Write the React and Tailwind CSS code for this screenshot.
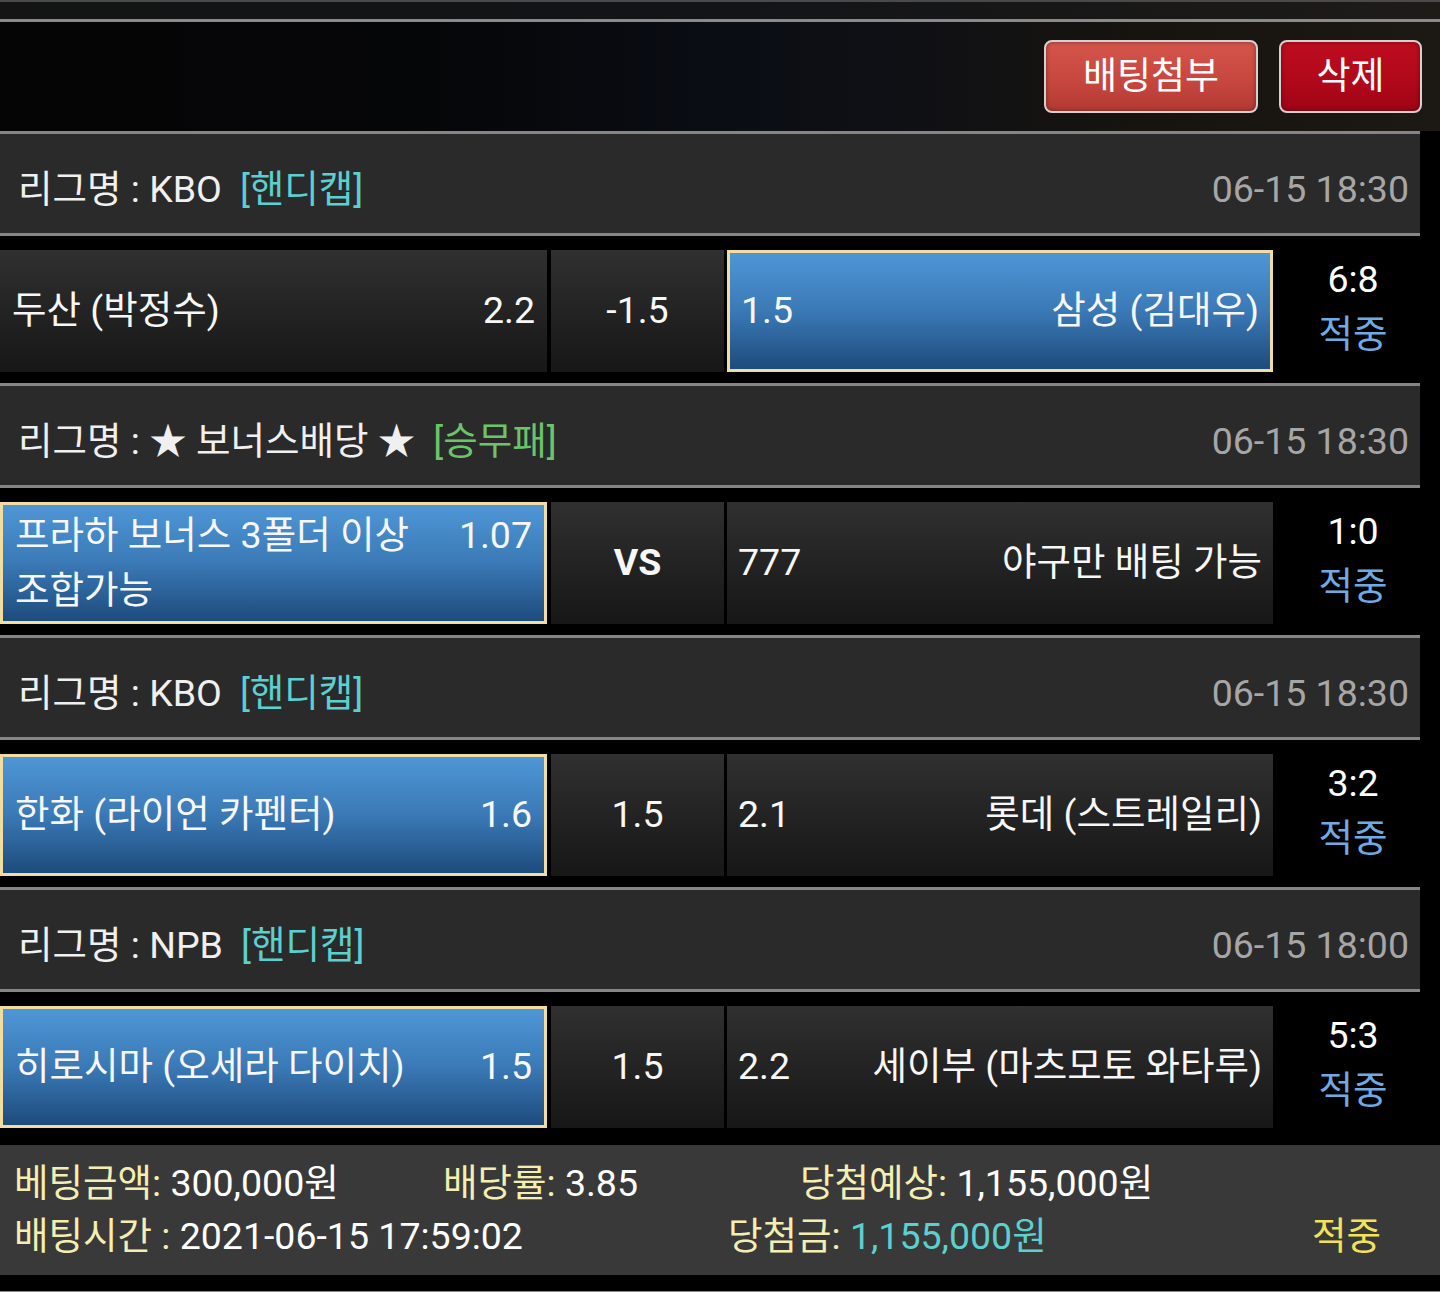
import React from "react";

const matches = [
  {
    league: "KBO",
    type: "[핸디캡]",
    typeColor: "text-[#5ccfcf]",
    date: "06-15 18:30",
    home: ["두산 (박정수)"],
    homeOdds: "2.2",
    mid: "-1.5",
    awayOdds: "1.5",
    away: "삼성 (김대우)",
    sel: "away",
    score: "6:8",
  },
  {
    league: "★ 보너스배당 ★",
    type: "[승무패]",
    typeColor: "text-[#6cc46a]",
    date: "06-15 18:30",
    home: ["프라하 보너스 3폴더 이상", "조합가능"],
    homeOdds: "1.07",
    mid: "VS",
    awayOdds: "777",
    away: "야구만 배팅 가능",
    sel: "home",
    score: "1:0",
  },
  {
    league: "KBO",
    type: "[핸디캡]",
    typeColor: "text-[#5ccfcf]",
    date: "06-15 18:30",
    home: ["한화 (라이언 카펜터)"],
    homeOdds: "1.6",
    mid: "1.5",
    awayOdds: "2.1",
    away: "롯데 (스트레일리)",
    sel: "home",
    score: "3:2",
  },
  {
    league: "NPB",
    type: "[핸디캡]",
    typeColor: "text-[#5ccfcf]",
    date: "06-15 18:00",
    home: ["히로시마 (오세라 다이치)"],
    homeOdds: "1.5",
    mid: "1.5",
    awayOdds: "2.2",
    away: "세이부 (마츠모토 와타루)",
    sel: "home",
    score: "5:3",
  },
];

const dark = "bg-[linear-gradient(180deg,#303030_0%,#232323_50%,#171717_100%)]";
const blue =
  "bg-[linear-gradient(180deg,#4f96d6_0%,#3a79b6_50%,#1d4b7c_100%)] border-[3px] border-[#f1dda0]";

function Section({ m, first }) {
  const homeSel = m.sel === "home";
  const awaySel = m.sel === "away";
  return (
    <div className={first ? "" : "mt-[11px]"}>
      <div className="w-[1420px] h-[105px] border-y-[3px] border-[#858585] bg-[#2a2a2a] flex items-center justify-between pt-[12px] pl-[18px] pr-[11px]">
        <div className="flex items-center text-[#f0f0f0]">
          <span>리그명 : {m.league}</span>
          <span className={`ml-[18px] ${m.typeColor}`}>{m.type}</span>
        </div>
        <div className="text-[#a6a6a6]">{m.date}</div>
      </div>
      <div className="mt-[14px] h-[122px] flex">
        <div
          className={`w-[547px] h-full flex items-center px-[12px] ${homeSel ? blue : dark}`}
        >
          {m.home.length > 1 ? (
            <div className="w-full leading-[55px]">
              <div className="flex justify-between">
                <span>{m.home[0]}</span>
                <span>{m.homeOdds}</span>
              </div>
              <div>{m.home[1]}</div>
            </div>
          ) : (
            <div className="w-full flex justify-between">
              <span>{m.home[0]}</span>
              <span>{m.homeOdds}</span>
            </div>
          )}
        </div>
        <div
          className={`ml-[4px] w-[173px] h-full flex items-center justify-center ${dark} ${
            m.mid === "VS" ? "font-bold" : ""
          }`}
        >
          {m.mid}
        </div>
        <div
          className={`ml-[3px] w-[546px] h-full flex items-center justify-between px-[11px] ${
            awaySel ? blue : dark
          }`}
        >
          <span>{m.awayOdds}</span>
          <span>{m.away}</span>
        </div>
        <div className="w-[147px] h-full flex flex-col items-center justify-center pl-[13px] pb-[9px] leading-[55px]">
          <span className="text-white">{m.score}</span>
          <span className="text-[#6faae2]">적중</span>
        </div>
      </div>
    </div>
  );
}

export default function App() {
  return (
    <div className="w-[1440px] h-[1292px] bg-black overflow-hidden text-[37.5px] leading-none text-[#f7f7f7] font-['Roboto','Noto_Sans_CJK_KR',sans-serif]">
      <div className="h-[131px] flex flex-col bg-[linear-gradient(90deg,#050506_0%,#050608_30%,#0a0d14_50%,#0f1015_62%,#17140f_80%,#1c1813_100%)]">
        <div className="h-[2px] bg-[#4a4a4a]" />
        <div className="h-[17px] bg-[linear-gradient(90deg,#141414_0%,#121418_50%,#1e1b17_100%)]" />
        <div className="h-[3px] bg-[#8a8a8a]" />
        <div className="flex-1 flex justify-end items-start pt-[18px] pr-[18px] gap-[21px]">
          <button className="w-[214px] h-[73px] rounded-[8px] border-2 border-[#d9cfcf] bg-[linear-gradient(180deg,#d4554c_0%,#c6463e_60%,#b13a33_100%)] text-white text-[37px] flex items-center justify-center shadow-[inset_0_0_4px_rgba(0,0,0,0.4)]">
            배팅첨부
          </button>
          <button className="w-[143px] h-[73px] rounded-[8px] border-2 border-[#d9cfcf] bg-[linear-gradient(180deg,#bd0d1f_0%,#b0081a_60%,#9d0515_100%)] text-white text-[37px] flex items-center justify-center shadow-[inset_0_0_4px_rgba(0,0,0,0.4)]">
            삭제
          </button>
        </div>
      </div>
      {matches.map((m, i) => (
        <Section key={i} m={m} first={i === 0} />
      ))}
      <div className="mt-[17px] h-[130px] bg-[#393939] pt-[12px] pl-[14px] leading-[53px]">
        <div className="flex">
          <div className="w-[429px]">
            <span className="text-[#f4eeb2]">베팅금액:</span>
            <span className="text-white"> 300,000원</span>
          </div>
          <div className="w-[357px]">
            <span className="text-[#f4eeb2]">배당률:</span>
            <span className="text-white"> 3.85</span>
          </div>
          <div>
            <span className="text-[#f4eeb2]">당첨예상:</span>
            <span className="text-white"> 1,155,000원</span>
          </div>
        </div>
        <div className="flex">
          <div className="w-[714px]">
            <span className="text-[#f4eeb2]">배팅시간 :</span>
            <span className="text-white"> 2021-06-15 17:59:02</span>
          </div>
          <div className="w-[584px]">
            <span className="text-[#f4eeb2]">당첨금:</span>
            <span className="text-[#5ccfcf]"> 1,155,000원</span>
          </div>
          <div className="text-[#f2e35a]">적중</div>
        </div>
      </div>
      <div className="mt-[16px] h-[2px] bg-[#8a8a8a]" />
    </div>
  );
}
